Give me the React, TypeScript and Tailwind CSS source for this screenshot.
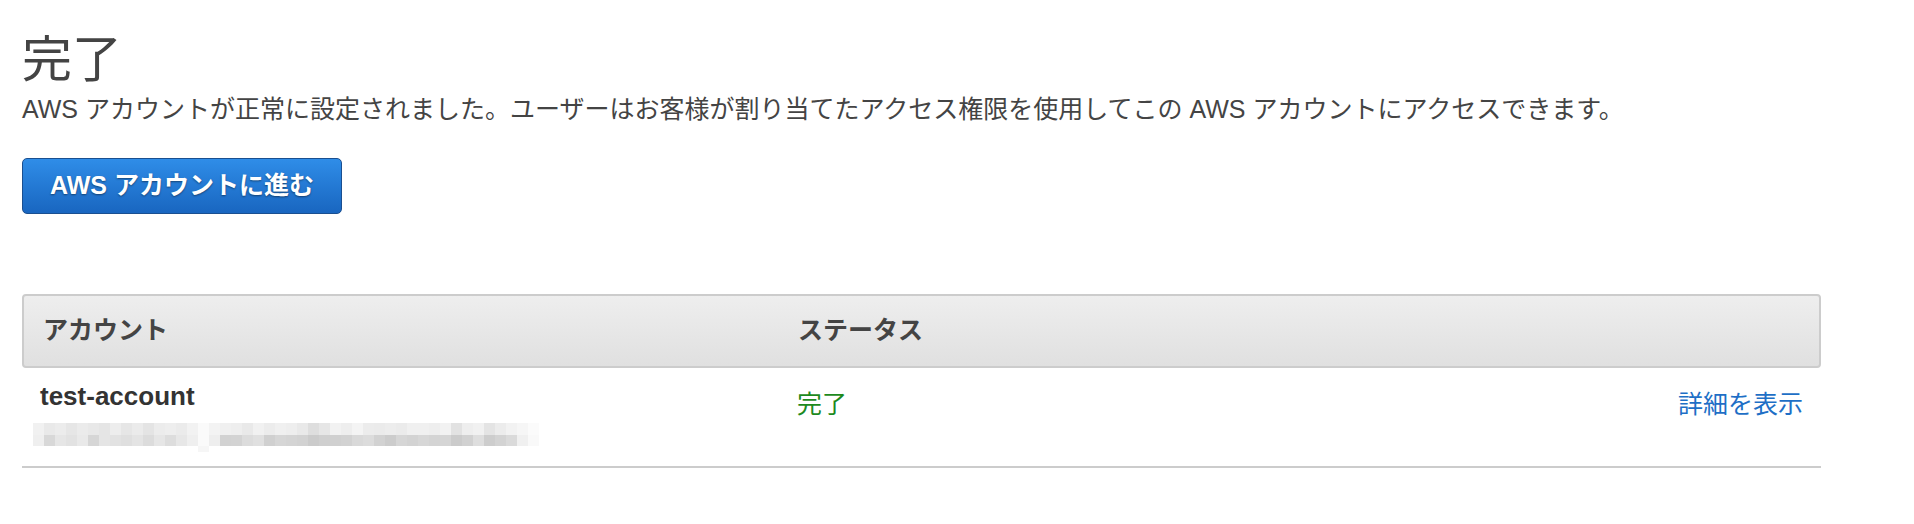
import React from "react";

const FONT = { fontFamily: '"Liberation Sans", "Noto Sans CJK JP", sans-serif' };

// ぼかし(モザイク)部分の色 — 固定値で並べる
const mosaicTop = [
  "#f1f1f1", "#e9e9e9", "#ececec", "#e6e6e6", "#ebebeb", "#e8e8e8", "#e5e5e5", "#ededed", "#e6e6e6", "#ebebeb",
  "#e4e4e4", "#ececec", "#eeeeee", "#ebebeb", "#f2f2f2", "#fafafa", "#f3f3f3", "#f0f0f0", "#eeeeee", "#e9e9e9",
  "#f1f1f1", "#ececec", "#f0f0f0", "#eeeeee", "#e9e9e9", "#dedede", "#e6e6e6", "#f2f2f2", "#eeeeee", "#f4f4f4",
  "#ececec", "#ebebeb", "#ededed", "#ebebeb", "#f0f0f0", "#f0f0f0", "#eeeeee", "#f2f2f2", "#e2e2e2", "#eeeeee",
  "#f1f1f1", "#e4e4e4", "#ececec", "#f2f2f2", "#f6f6f6", "#fbfbfb",
];
const mosaicBottom = [
  "#efefef", "#d8d8d8", "#e6e6e6", "#e2e2e2", "#e9e9e9", "#d6d6d6", "#e5e5e5", "#e2e2e2", "#dfdfdf", "#e4e4e4",
  "#dcdcdc", "#e6e6e6", "#dddddd", "#e7e7e7", "#efefef", "#fafafa", "#eeeeee", "#d2d2d2", "#d3d3d3", "#dcdcdc",
  "#e0e0e0", "#d0d0d0", "#d6d6d6", "#d4d4d4", "#d2d2d2", "#cbcbcb", "#cfcfcf", "#d0d0d0", "#d2d2d2", "#d9d9d9",
  "#dcdcdc", "#d2d2d2", "#cccccc", "#d6d6d6", "#d3d3d3", "#d7d7d7", "#d4d4d4", "#d5d5d5", "#cbcbcb", "#d1d1d1",
  "#dedede", "#cdcdcd", "#d3d3d3", "#dadada", "#f0f0f0", "#f9f9f9",
];

function Mosaic() {
  return (
    <div className="flex flex-col">
      <div className="flex">
        {mosaicTop.map((c, i) => (
          <div key={i} className="w-[11px] h-[12px]" style={{ background: c }} />
        ))}
      </div>
      <div className="flex">
        {mosaicBottom.map((c, i) => (
          <div key={i} className="w-[11px] h-[11px]" style={{ background: c }} />
        ))}
      </div>
      <div className="flex h-[6px]">
        <div className="w-[165px]" />
        <div className="w-[11px] bg-[#f6f6f6]" />
      </div>
    </div>
  );
}

export default function App() {
  return (
    <div className="w-[1914px] h-[524px] bg-white text-[#444444] px-[22px] pt-[31px]" style={FONT}>
      {/* タイトル */}
      <h1 className="text-[50px] leading-[58px] font-normal">完了</h1>
      <p className="text-[25px] leading-[30px] mt-[5px]">
        AWS アカウントが正常に設定されました。ユーザーはお客様が割り当てたアクセス権限を使用してこの AWS アカウントにアクセスできます。
      </p>

      {/* ボタン */}
      <button className="mt-[34px] w-[320px] h-[56px] rounded-[5px] border border-[#1a4f90] bg-gradient-to-b from-[#2f8de8] to-[#1966c0] text-white font-bold text-[25px] [text-shadow:0_1px_2px_rgba(0,0,0,0.45)]">
        AWS アカウントに進む
      </button>

      {/* テーブル */}
      <div className="mt-[80px] w-[1799px]">
        <div className="flex items-center h-[74px] border-2 border-[#cccccc] rounded-[4px] bg-gradient-to-b from-[#eeeeee] to-[#e0e0e0] font-bold text-[25px]">
          <div className="w-[753px] pl-[19px]">アカウント</div>
          <div className="pl-[21px]">ステータス</div>
        </div>
        <div className="flex items-start h-[100px] border-b-2 border-[#cccccc]">
          <div className="w-[755px] pl-[18px] pt-[13px]">
            <div className="text-[26px] leading-[30px] font-bold text-[#333333]">test-account</div>
            <div className="mt-[12px] ml-[-7px]">
              <Mosaic />
            </div>
          </div>
          <div className="flex-1 pl-[20px] pt-[21px] text-[25px] leading-[30px] text-[#1d8a1d]">完了</div>
          <a className="pr-[18px] pt-[21px] text-[25px] leading-[30px] text-[#1e6fc6]">詳細を表示</a>
        </div>
      </div>
    </div>
  );
}
